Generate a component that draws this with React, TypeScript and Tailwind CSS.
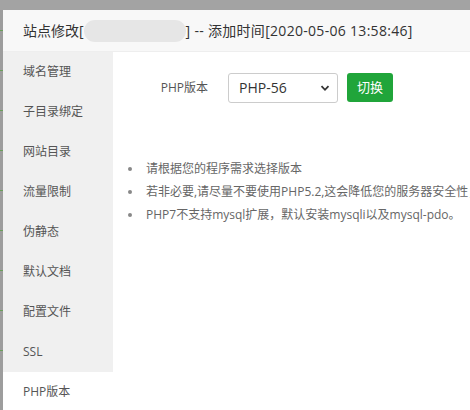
const menu = [
  "域名管理",
  "子目录绑定",
  "网站目录",
  "流量限制",
  "伪静态",
  "默认文档",
  "配置文件",
  "SSL",
  "PHP版本",
];

const tips = [
  "请根据您的程序需求选择版本",
  "若非必要,请尽量不要使用PHP5.2,这会降低您的服务器安全性；",
  "PHP7不支持mysql扩展，默认安装mysqli以及mysql-pdo。",
];

export default function App() {
  return (
    <div
      className="w-[470px] h-[410px] overflow-hidden bg-[#9b9b9b] flex flex-col"
      style={{ fontFamily: '"Open Sans", "Noto Sans CJK SC", sans-serif' }}
    >
      <div className="h-[10px] shrink-0 bg-[#a3a3a3]" />
      <div className="flex flex-1 min-h-0">
        {/* page behind the overlay */}
        <div className="w-[3px] shrink-0 bg-[#9d9d9d] flex flex-col">
          {menu.map((m) => (
            <div key={m} className="h-[40px] flex flex-col justify-center gap-[4px]">
              <div className="h-[1px] bg-[#6a9f5a]" />
            </div>
          ))}
        </div>

        <div className="flex-1 flex flex-col bg-white">
          <div className="h-[42px] shrink-0 bg-[#f8f8f8] border-b border-[#eeeeee] flex items-center pl-[20px] text-[14px] text-[#333] whitespace-nowrap">
            <span>站点修改[</span>
            <span className="inline-block w-[102px] h-[22px] rounded-full bg-[#e6e6e6]" />
            <span className="tracking-[0.3px]">] -- 添加时间[2020-05-06 13:58:46]</span>
          </div>

          <div className="flex flex-1 min-h-0">
            <div className="w-[110px] shrink-0 flex flex-col">
              {menu.map((m, i) => (
                <div
                  key={m}
                  className={
                    i === menu.length - 1
                      ? "h-[40px] shrink-0 flex items-center pl-[20px] text-[12px] text-[#555] bg-white"
                      : "h-[40px] shrink-0 flex items-center pl-[20px] text-[12px] text-[#555] bg-[#f0f0f0]"
                  }
                >
                  {m}
                </div>
              ))}
            </div>

            <div className="flex-1 min-w-0 pt-[20px]">
              <div className="flex items-center h-[31px]">
                <div className="w-[105px] pr-[10px] text-right text-[12px] text-[#555]">PHP版本</div>
                <div className="ml-[10px] w-[110px] h-[30px] border border-[#ccc] rounded-[3px] flex items-center justify-between pl-[10px] pr-[7px] text-[14px] text-[#333]">
                  <span>PHP-56</span>
                  <svg width="10" height="10" viewBox="0 0 10 10">
                    <path d="M1.5 3.2 L5 6.8 L8.5 3.2" fill="none" stroke="#333" strokeWidth="1.8" />
                  </svg>
                </div>
                <button className="ml-[9px] w-[46px] h-[29px] rounded-[3px] bg-[#20a53a] text-white text-[13px]">
                  切换
                </button>
              </div>

              <ul className="mt-[54px] flex flex-col">
                {tips.map((t) => (
                  <li key={t} className="h-[23px] flex items-center whitespace-nowrap text-[12px] text-[#666]">
                    <span className="ml-[15px] mr-[14px] w-[4px] h-[4px] rounded-full bg-[#888] shrink-0" />
                    {t}
                  </li>
                ))}
              </ul>
            </div>
          </div>
        </div>
      </div>
    </div>
  );
}
